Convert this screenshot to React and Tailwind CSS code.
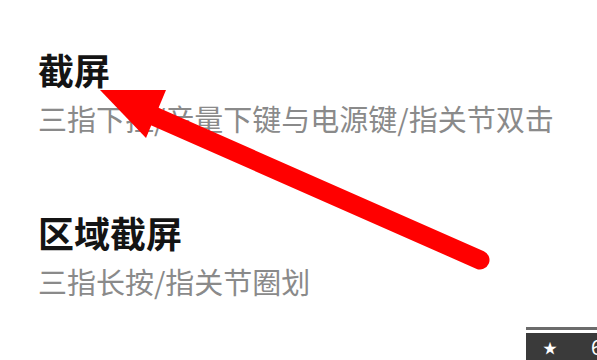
import React from 'react';

const Item = ({ title, desc, className = '' }) => (
  <div className={`flex flex-col ${className}`}>
    <div className="text-[36px] leading-[42px] font-bold text-[#141414]">{title}</div>
    <div className="text-[29px] leading-[36px] text-[#8a8a8a] mt-[10px]">{desc}</div>
  </div>
);

const Arrow = () => (
  <svg className="absolute left-0 top-0" width="597" height="360" viewBox="0 0 597 360">
    <line x1="140" y1="110" x2="480" y2="260" stroke="#ff0000" strokeWidth="19" strokeLinecap="round" />
    <polygon points="100,90 166,90 146,138" fill="#ff0000" />
  </svg>
);

export default function App() {
  return (
    <div
      className="relative w-[597px] h-[360px] bg-white overflow-hidden"
      style={{ fontFamily: '"Noto Sans CJK SC", "Noto Sans", sans-serif' }}
    >
      <div className="flex flex-col pl-[38px] pt-[48px]">
        <Item title="截屏" desc="三指下拉/音量下键与电源键/指关节双击" />
        <Item title="区域截屏" desc="三指长按/指关节圈划" className="mt-[75px]" />
      </div>
      <Arrow />
      <div className="absolute left-[526px] top-[327px] w-[71px] h-[33px] flex flex-col">
        <div className="h-[3px] bg-[#6b6b6b]" />
        <div className="h-[3px] bg-white" />
        <div className="flex-1 bg-[#3a3a3a] flex items-center pl-[17px] gap-[34px]">
          <span className="text-white text-[14px] leading-none">★</span>
          <span className="text-white text-[20px] leading-none">6</span>
        </div>
      </div>
    </div>
  );
}
